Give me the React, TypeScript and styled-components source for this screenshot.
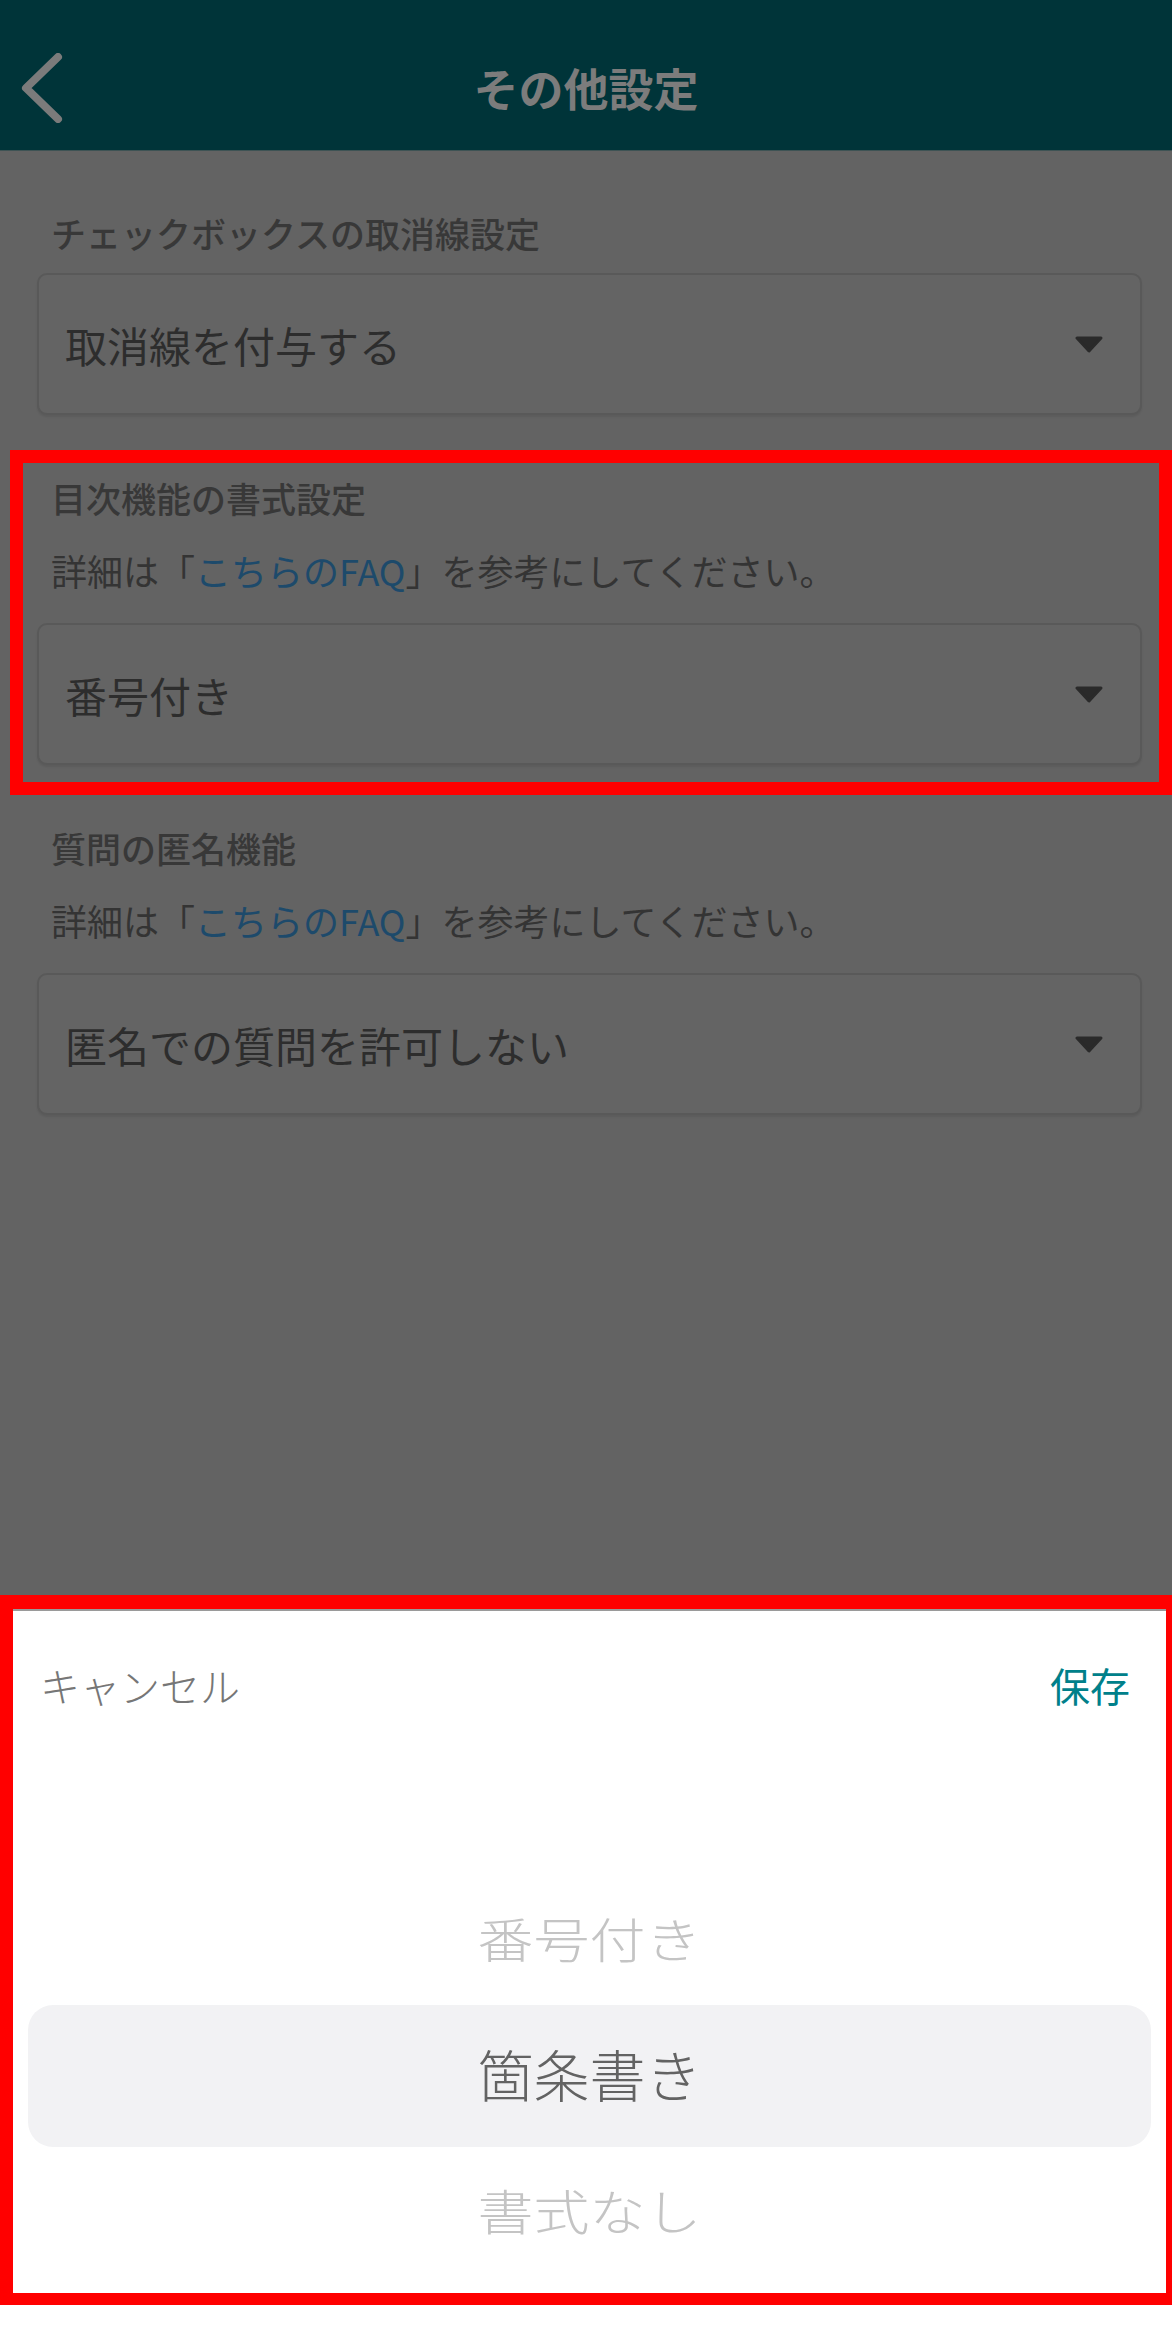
import React from "react";
import styled, { createGlobalStyle } from "styled-components";

const GlobalStyle = createGlobalStyle`
  html, body {
    margin: 0;
    padding: 0;
    background: #636363;
  }

  body {
    font-family: "Noto Sans CJK JP", "Noto Sans", sans-serif;
  }
`;

const Screen = styled.div`
  display: flex;
  flex-direction: column;
  width: 1172px;
  min-height: 2336px;
  background: #636363;
`;

const Header = styled.header`
  display: grid;
  grid-template-columns: 1fr auto 1fr;
  align-items: center;
  height: 151px;
  padding-top: 25px;
  box-sizing: border-box;
  background: #003439;
  border-bottom: 1px solid #3e5354;
`;

const BackButton = styled.button`
  justify-self: start;
  display: flex;
  align-items: center;
  margin-left: 20px;
  padding: 0;
  border: none;
  background: none;
`;

const Title = styled.h1`
  margin: 0;
  font-size: 45px;
  font-weight: 700;
  line-height: 60px;
  color: #7c7c7c;
`;

const Main = styled.main`
  flex: 1;
  display: flex;
  flex-direction: column;
  gap: 58px;
  padding: 57px 30px 0 37px;
`;

const Section = styled.section`
  position: relative;
  display: flex;
  flex-direction: column;
`;

const Label = styled.h2`
  margin: 0;
  padding-left: 14px;
  font-size: 35px;
  font-weight: 500;
  line-height: 50px;
  color: #383838;
`;

const Detail = styled.p`
  margin: 22px 0 0;
  padding-left: 14px;
  font-size: 36px;
  line-height: 50px;
  color: #343434;
`;

const Link = styled.a`
  color: #1d4a6b;
  text-decoration: none;
`;

const SelectBox = styled.div<{ $gap: number }>`
  display: flex;
  align-items: center;
  justify-content: space-between;
  height: 142px;
  margin-top: ${({ $gap }) => $gap}px;
  padding: 0 36px 0 26px;
  box-sizing: border-box;
  border: 2px solid #595959;
  border-radius: 10px;
  background: #646464;
  box-shadow: 0 2px 2px rgba(0, 0, 0, 0.08);
  font-size: 42px;
  color: #2d2d2d;
`;

const Marker = styled.div<{ $sides: string }>`
  position: absolute;
  inset: -23px -30px -30px -27px;
  border: solid #ff0000;
  border-width: ${({ $sides }) => $sides};
  pointer-events: none;
`;

const Sheet = styled.div`
  position: relative;
  display: flex;
  flex-direction: column;
  height: 727px;
  box-sizing: border-box;
  background: #ffffff;
  border-top: 2px solid #9a9a9a;
`;

const SheetMarker = styled(Marker)`
  inset: -16px 0 31px 0;
`;

const Toolbar = styled.div`
  display: flex;
  align-items: center;
  justify-content: space-between;
  height: 152px;
  padding: 0 42px 4px 40px;
  box-sizing: border-box;
`;

const ToolbarButton = styled.button<{ $accent?: boolean }>`
  padding: 0;
  border: none;
  background: none;
  font-family: inherit;
  font-size: 40px;
  font-weight: ${({ $accent }) => ($accent ? 400 : 300)};
  color: ${({ $accent }) => ($accent ? "#00808a" : "#767676")};
`;

const Wheel = styled.div`
  display: flex;
  flex-direction: column;
  margin-top: 112px;
`;

const WheelRow = styled.div<{ $selected?: boolean }>`
  display: flex;
  align-items: center;
  justify-content: center;
  height: ${({ $selected }) => ($selected ? 142 : 130)}px;
  margin: 0 21px 0 28px;
  border-radius: 25px;
  background: ${({ $selected }) => ($selected ? "#f2f2f4" : "transparent")};
  font-size: 56px;
  font-weight: 300;
  color: ${({ $selected }) => ($selected ? "#636363" : "#c4c4c4")};

  span {
    display: inline-block;
    margin-top: -8px;
    transform: ${({ $selected }) => ($selected ? "none" : "scaleY(0.86)")};
  }
`;

const ChevronLeft = () => (
  <svg width="44" height="70" viewBox="0 0 44 70">
    <path
      d="M38 4 L6 35 L38 66"
      fill="none"
      stroke="#7b7b7b"
      strokeWidth="8"
      strokeLinecap="round"
      strokeLinejoin="round"
    />
  </svg>
);

const Caret = () => (
  <svg width="30" height="18" viewBox="0 0 30 18">
    <path
      d="M3 3 H27 L15 16 Z"
      fill="#2a2a2a"
      stroke="#2a2a2a"
      strokeWidth="3"
      strokeLinejoin="round"
    />
  </svg>
);

const Select = ({ value, gap }: { value: string; gap: number }) => (
  <SelectBox $gap={gap}>
    <span>{value}</span>
    <Caret />
  </SelectBox>
);

const FaqNote = () => (
  <Detail>
    詳細は「<Link href="#">こちらのFAQ</Link>」を参考にしてください。
  </Detail>
);

const options = ["番号付き", "箇条書き", "書式なし"];

export default function App() {
  return (
    <Screen>
      <GlobalStyle />
      <Header>
        <BackButton aria-label="戻る">
          <ChevronLeft />
        </BackButton>
        <Title>その他設定</Title>
        <div />
      </Header>

      <Main>
        <Section>
          <Label>チェックボックスの取消線設定</Label>
          <Select value="取消線を付与する" gap={15} />
        </Section>

        <Section>
          <Label>目次機能の書式設定</Label>
          <FaqNote />
          <Select value="番号付き" gap={28} />
          <Marker $sides="13px" />
        </Section>

        <Section>
          <Label>質問の匿名機能</Label>
          <FaqNote />
          <Select value="匿名での質問を許可しない" gap={28} />
        </Section>
      </Main>

      <Sheet>
        <Toolbar>
          <ToolbarButton>キャンセル</ToolbarButton>
          <ToolbarButton $accent>保存</ToolbarButton>
        </Toolbar>
        <Wheel>
          {options.map((option, i) => (
            <WheelRow key={option} $selected={i === 1}>
              <span>{option}</span>
            </WheelRow>
          ))}
        </Wheel>
        <SheetMarker $sides="14px 6px 12px 13px" />
      </Sheet>
    </Screen>
  );
}
